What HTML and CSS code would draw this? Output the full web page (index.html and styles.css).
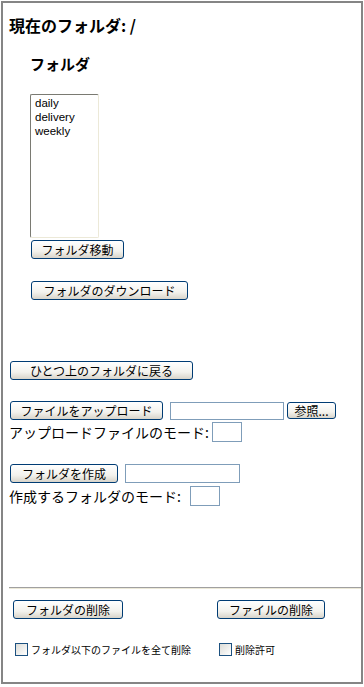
FILE: index.html
```html
<!DOCTYPE html>
<html lang="ja">
<head>
    <meta charset="UTF-8">
    <meta name="viewport" content="width=device-width, initial-scale=1.0">
    <title>ファイル管理</title>
    <link rel="stylesheet" href="styles.css">
</head>
<body>

<div class="frame">
    <h1 class="current">現在のフォルダ: /</h1>

    <div class="folders">
        <h2>フォルダ</h2>
        <select class="folder-list" size="10">
            <option>daily</option>
            <option>delivery</option>
            <option>weekly</option>
        </select>
        <button class="btn btn-move">フォルダ移動</button>
        <button class="btn btn-download">フォルダのダウンロード</button>
    </div>

    <button class="btn btn-up">ひとつ上のフォルダに戻る</button>

    <div class="row row-upload">
        <button class="btn btn-upload">ファイルをアップロード</button>
        <input type="text" class="field field-path">
        <button class="btn btn-browse">参照...</button>
    </div>
    <div class="mode mode-upload">
        <span>アップロードファイルのモード:</span>
        <input type="text" class="field field-mode">
    </div>

    <div class="row row-create">
        <button class="btn btn-create">フォルダを作成</button>
        <input type="text" class="field field-name">
    </div>
    <div class="mode mode-create">
        <span>作成するフォルダのモード:</span>
        <input type="text" class="field field-mode">
    </div>

    <hr class="divider">

    <div class="delete">
        <button class="btn btn-del-folder">フォルダの削除</button>
        <button class="btn btn-del-file">ファイルの削除</button>
        <label class="check"><input type="checkbox">フォルダ以下のファイルを全て削除</label>
        <label class="check"><input type="checkbox">削除許可</label>
    </div>
</div>

</body>
</html>
```

FILE: styles.css
```css
body {
    margin: 0;
    background-color: #fff;
    font-family: "Noto Sans CJK JP", "Liberation Sans", sans-serif;
    color: #000;
}
.frame {
    box-sizing: border-box;
    width: 362px;
    height: 683px;
    margin: 1px;
    padding: 0 0 0 6px;
    border: 2px solid #858585;
}
.current {
    margin: 13px 0 0;
    font-size: 16px;
    line-height: 19px;
    font-weight: bold;
}
.folders {
    padding-left: 21px;
}
.folders h2 {
    margin: 20px 0 0;
    font-size: 15px;
    line-height: 18px;
    font-weight: bold;
}
.folder-list {
    display: block;
    box-sizing: border-box;
    width: 69px;
    height: 144px;
    margin-top: 21px;
    padding: 2px 2px;
    border: 1px solid;
    border-color: #7a7a72 #ece9d8 #ece9d8 #7a7a72;
    font-family: "Liberation Sans", sans-serif;
    font-size: 11.5px;
    overflow: hidden;
    outline: none;
}
.folder-list option {
    padding: 0 2px;
    line-height: 14px;
    height: 14px;
}

.btn {
    display: block;
    box-sizing: border-box;
    height: 19px;
    margin: 0 0 0 1px;
    padding: 0;
    border: 1px solid #003c74;
    border-radius: 3px;
    background: linear-gradient(#ffffff, #f3f2ed 60%, #d8d4ca);
    font-family: "Noto Sans CJK JP", sans-serif;
    font-size: 12px;
    line-height: 16px;
    color: #000;
}
.btn-move { width: 93px; margin-top: 2px; }
.btn-download { width: 157px; margin-top: 22px; }
.btn-up { width: 183px; margin-top: 61px; }
.btn-upload { width: 153px; }
.btn-browse { width: 49px; height: 17px; margin-left: 3px; line-height: 14px; }
.btn-create { width: 108px; }
.btn-del-folder { width: 110px; }
.btn-del-file { width: 108px; }

.row {
    display: flex;
    align-items: center;
}
.row-upload { margin-top: 21px; }
.row-create { margin-top: 22px; }

.field {
    box-sizing: border-box;
    height: 18px;
    margin: 0;
    border: 1px solid #7f9db9;
    padding: 0 2px;
}
.field-path { width: 114px; margin-left: 7px; }
.field-name { width: 115px; height: 19px; margin-left: 7px; }
.field-mode { width: 30px; height: 20px; margin-left: 4px; }

.mode {
    display: flex;
    align-items: center;
    font-size: 14px;
    line-height: 20px;
}
.mode-upload { margin-top: 2px; }
.mode-upload .field-mode { margin-left: 3px; }
.mode-create { margin-top: 3px; }
.mode-create .field-mode { margin-left: 9px; }

.divider {
    margin: 81px 0 0;
    height: 0;
    border: 0;
    border-top: 1px solid #a0a0a0;
    border-bottom: 1px solid #ece9d8;
}

.delete {
    display: grid;
    grid-template-columns: 204px auto;
    padding-left: 3px;
    margin-top: 11px;
}
.delete .btn { margin-left: 1px; }
.check {
    display: flex;
    align-items: center;
    margin-top: 23px;
    padding-left: 3px;
    font-size: 10px;
    line-height: 15px;
}
.check input {
    appearance: none;
    box-sizing: border-box;
    width: 13px;
    height: 13px;
    margin: 0 3px 0 0;
    border: 1px solid #1c5180;
    background: linear-gradient(135deg, #dcdcd7, #ffffff);
}
```
